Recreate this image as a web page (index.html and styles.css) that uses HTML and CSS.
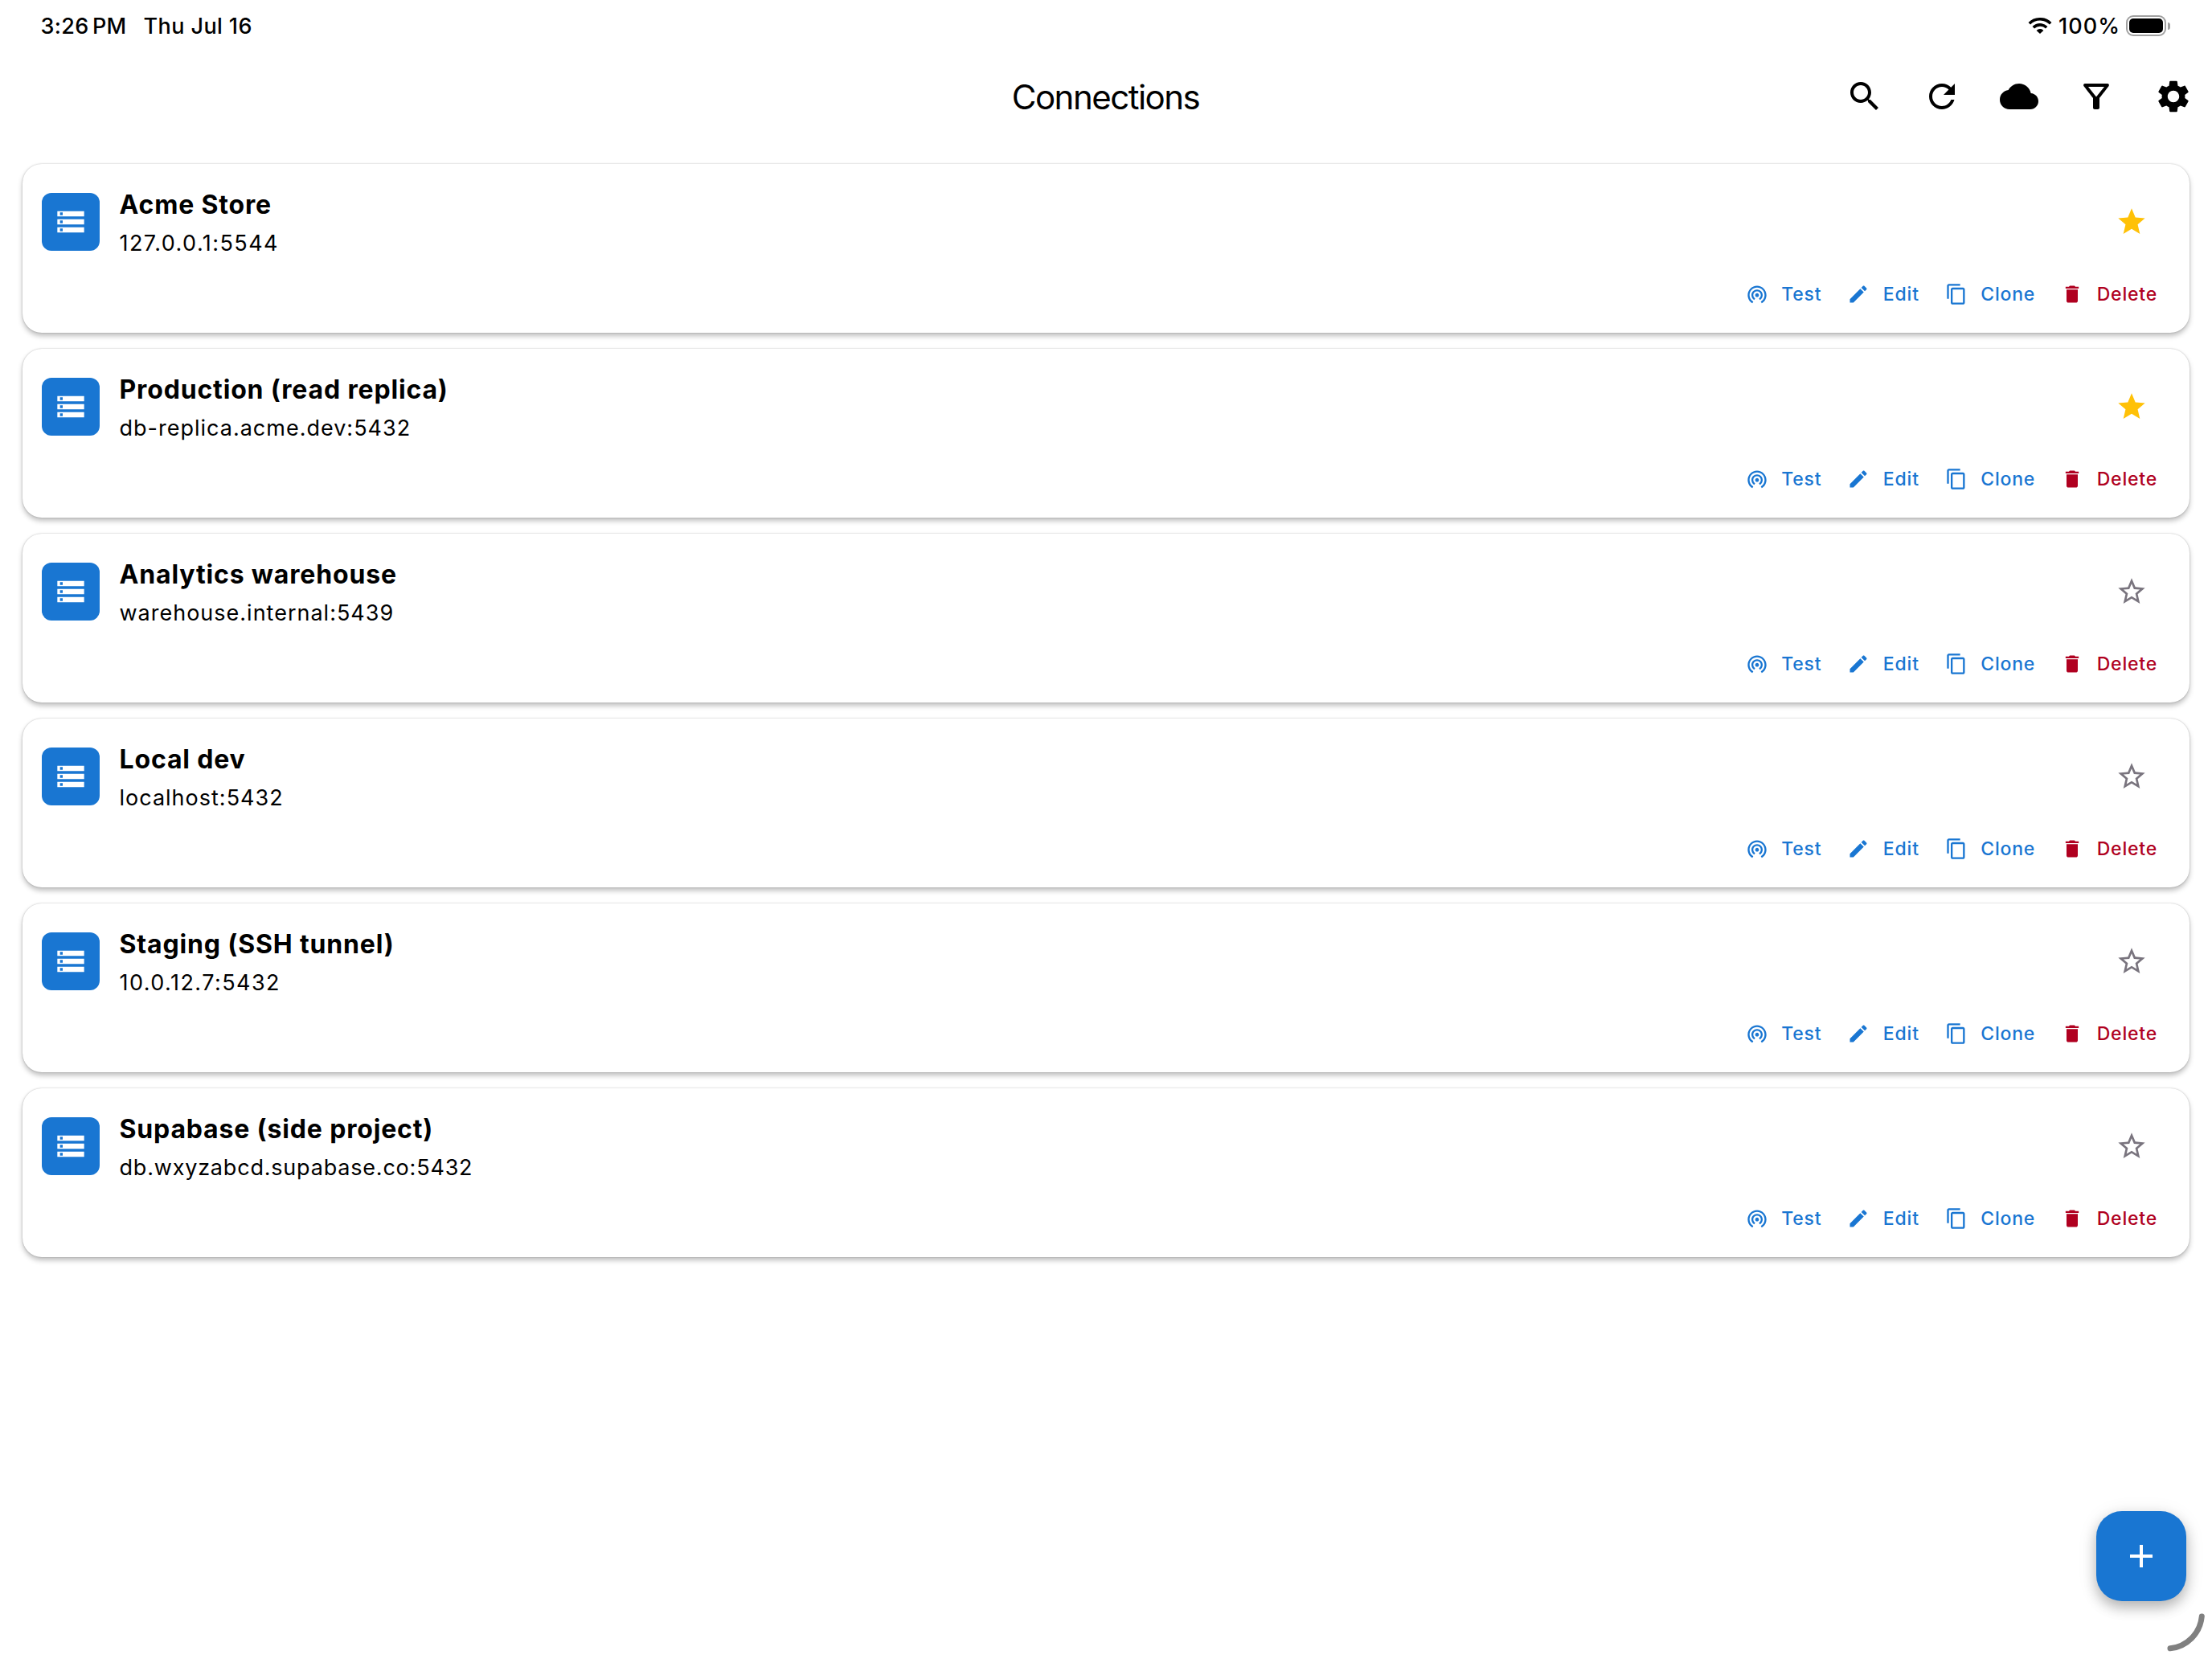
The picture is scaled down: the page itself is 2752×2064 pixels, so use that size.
FILE: index.html
```html
<!DOCTYPE html>
<html lang="en">
<head>
    <meta charset="UTF-8">
    <meta name="viewport" content="width=device-width, initial-scale=1.0">
    <title>Connections</title>
    <link rel="stylesheet" href="styles.css">
</head>
<body>

    <!-- Icon sprite -->
    <svg class="sprite" aria-hidden="true">
        <symbol id="storage" viewBox="0 0 24 24"><path d="M2 20h20v-4H2v4zm2-3h2v2H4v-2zM2 4v4h20V4H2zm4 3H4V5h2v2zm-4 7h20v-4H2v4zm2-3h2v2H4v-2z"/></symbol>
        <symbol id="star" viewBox="0 0 24 24"><path d="M12 17.27L18.18 21l-1.64-7.03L22 9.24l-7.19-.61L12 2 9.19 8.63 2 9.24l5.46 4.73L5.82 21z"/></symbol>
        <symbol id="star-outline" viewBox="0 0 24 24"><path d="M22 9.24l-7.19-.62L12 2 9.19 8.63 2 9.24l5.46 4.73L5.82 21 12 17.27 18.18 21l-1.63-7.03L22 9.24zM12 15.4l-3.76 2.27 1-4.28-3.32-2.88 4.38-.38L12 6.1l1.71 4.04 4.38.38-3.32 2.88 1 4.28L12 15.4z"/></symbol>
        <symbol id="test" viewBox="0 0 24 24"><path d="M12 11c-1.1 0-2 .9-2 2s.9 2 2 2 2-.9 2-2-.9-2-2-2zm6 2c0-3.31-2.69-6-6-6s-6 2.69-6 6c0 2.22 1.21 4.15 3 5.19l1-1.74c-1.19-.7-2-1.97-2-3.45 0-2.21 1.79-4 4-4s4 1.79 4 4c0 1.48-.81 2.75-2 3.45l1 1.74c1.79-1.04 3-2.97 3-5.19zM12 3C6.48 3 2 7.48 2 13c0 3.7 2.01 6.92 4.99 8.65l1-1.73C5.61 18.53 4 15.96 4 13c0-4.42 3.58-8 8-8s8 3.58 8 8c0 2.96-1.61 5.53-4 6.92l1 1.73c2.99-1.73 5-4.95 5-8.65 0-5.52-4.48-10-10-10z"/></symbol>
        <symbol id="edit" viewBox="0 0 24 24"><path d="M3 17.25V21h3.75L17.81 9.94l-3.75-3.75L3 17.25zM20.71 7.04c.39-.39.39-1.02 0-1.41l-2.34-2.34c-.39-.39-1.02-.39-1.41 0l-1.83 1.83 3.75 3.75 1.83-1.83z"/></symbol>
        <symbol id="clone" viewBox="0 0 24 24"><path d="M16 1H4c-1.1 0-2 .9-2 2v14h2V3h12V1zm3 4H8c-1.1 0-2 .9-2 2v14c0 1.1.9 2 2 2h11c1.1 0 2-.9 2-2V7c0-1.1-.9-2-2-2zm0 16H8V7h11v14z"/></symbol>
        <symbol id="delete" viewBox="0 0 24 24"><path d="M6 19c0 1.1.9 2 2 2h8c1.1 0 2-.9 2-2V7H6v12zM19 4h-3.5l-1-1h-5l-1 1H5v2h14V4z"/></symbol>
    </svg>

    <div class="status-bar">
        <div class="status-left">
            <span class="time">3:26</span>
            <span class="meridiem">PM</span>
            <span class="date">Thu Jul 16</span>
        </div>
        <div class="status-right">
            <svg class="wifi" viewBox="0 0 30 20">
                <path d="M1.8 7.2a18.8 18.8 0 0 1 26.4 0" fill="none" stroke="#000" stroke-width="3.6"/>
                <path d="M6.8 12.2a11.7 11.7 0 0 1 16.4 0" fill="none" stroke="#000" stroke-width="3.6"/>
                <path d="M10.6 15.9a6.3 6.3 0 0 1 8.8 0L15 20z"/>
            </svg>
            <span class="percent">100%</span>
            <div class="battery"><div class="battery-level"></div></div>
            <div class="battery-cap"></div>
        </div>
    </div>

    <header class="header">
        <div></div>
        <h1>Connections</h1>
        <div class="header-actions">
            <svg viewBox="0 0 24 24"><path d="M15.5 14h-.79l-.28-.27C15.41 12.59 16 11.11 16 9.5 16 5.91 13.09 3 9.5 3S3 5.91 3 9.5 5.91 16 9.5 16c1.61 0 3.09-.59 4.23-1.57l.27.28v.79l5 4.99L20.49 19l-4.99-5zm-6 0C7.01 14 5 11.99 5 9.5S7.01 5 9.5 5 14 7.01 14 9.5 11.99 14 9.5 14z"/></svg>
            <svg viewBox="0 0 24 24"><path d="M17.65 6.35C16.2 4.9 14.21 4 12 4c-4.42 0-7.99 3.58-7.99 8s3.57 8 7.99 8c3.73 0 6.84-2.55 7.73-6h-2.08c-.82 2.33-3.04 4-5.65 4-3.31 0-6-2.69-6-6s2.69-6 6-6c1.66 0 3.14.69 4.22 1.78L13 11h7V4l-2.35 2.35z"/></svg>
            <svg viewBox="0 0 24 24"><path d="M19.35 10.04C18.67 6.59 15.64 4 12 4 9.11 4 6.6 5.64 5.35 8.04 2.34 8.36 0 10.91 0 14c0 3.31 2.69 6 6 6h13c2.76 0 5-2.24 5-5 0-2.64-2.05-4.78-4.65-4.96z"/></svg>
            <svg viewBox="0 0 24 24"><path d="M7 6h10l-5.01 6.3L7 6zm-2.75-.39C6.27 8.2 10 13 10 13v6c0 .55.45 1 1 1h2c.55 0 1-.45 1-1v-6s3.72-4.8 5.74-7.39A.998.998 0 0 0 18.95 4H5.04c-.83 0-1.3.95-.79 1.61z"/></svg>
            <svg viewBox="0 0 24 24"><path d="M19.14 12.94c.04-.3.06-.61.06-.94 0-.32-.02-.64-.07-.94l2.03-1.58c.18-.14.23-.41.12-.61l-1.92-3.32c-.12-.22-.37-.29-.59-.22l-2.39.96c-.5-.38-1.03-.7-1.62-.94l-.36-2.54c-.04-.24-.24-.41-.48-.41h-3.84c-.24 0-.43.17-.47.41l-.36 2.54c-.59.24-1.13.57-1.62.94l-2.39-.96c-.22-.08-.47 0-.59.22L2.74 8.87c-.12.21-.08.47.12.61l2.03 1.58c-.05.3-.09.63-.09.94s.02.64.07.94l-2.03 1.58c-.18.14-.23.41-.12.61l1.92 3.32c.12.22.37.29.59.22l2.39-.96c.5.38 1.03.7 1.62.94l.36 2.54c.05.24.24.41.48.41h3.84c.24 0 .44-.17.47-.41l.36-2.54c.59-.24 1.13-.56 1.62-.94l2.39.96c.22.08.47 0 .59-.22l1.92-3.32c.12-.22.07-.47-.12-.61l-2.01-1.58zM12 15.6c-1.98 0-3.6-1.62-3.6-3.6s1.62-3.6 3.6-3.6 3.6 1.62 3.6 3.6-1.62 3.6-3.6 3.6z"/></svg>
        </div>
    </header>

    <main class="connection-list">
        <div class="card">
            <div class="card-top">
                <div class="db-icon"><svg><use href="#storage"/></svg></div>
                <div class="card-text">
                    <h2>Acme Store</h2>
                    <p class="ip">127.0.0.1:5544</p>
                </div>
                <svg class="star active"><use href="#star"/></svg>
            </div>
            <div class="card-actions">
                <button><svg><use href="#test"/></svg><span>Test</span></button>
                <button><svg><use href="#edit"/></svg><span>Edit</span></button>
                <button><svg><use href="#clone"/></svg><span>Clone</span></button>
                <button class="danger"><svg><use href="#delete"/></svg><span>Delete</span></button>
            </div>
        </div>

        <div class="card">
            <div class="card-top">
                <div class="db-icon"><svg><use href="#storage"/></svg></div>
                <div class="card-text">
                    <h2>Production (read replica)</h2>
                    <p>db-replica.acme.dev:5432</p>
                </div>
                <svg class="star active"><use href="#star"/></svg>
            </div>
            <div class="card-actions">
                <button><svg><use href="#test"/></svg><span>Test</span></button>
                <button><svg><use href="#edit"/></svg><span>Edit</span></button>
                <button><svg><use href="#clone"/></svg><span>Clone</span></button>
                <button class="danger"><svg><use href="#delete"/></svg><span>Delete</span></button>
            </div>
        </div>

        <div class="card">
            <div class="card-top">
                <div class="db-icon"><svg><use href="#storage"/></svg></div>
                <div class="card-text">
                    <h2>Analytics warehouse</h2>
                    <p>warehouse.internal:5439</p>
                </div>
                <svg class="star"><use href="#star-outline"/></svg>
            </div>
            <div class="card-actions">
                <button><svg><use href="#test"/></svg><span>Test</span></button>
                <button><svg><use href="#edit"/></svg><span>Edit</span></button>
                <button><svg><use href="#clone"/></svg><span>Clone</span></button>
                <button class="danger"><svg><use href="#delete"/></svg><span>Delete</span></button>
            </div>
        </div>

        <div class="card">
            <div class="card-top">
                <div class="db-icon"><svg><use href="#storage"/></svg></div>
                <div class="card-text">
                    <h2>Local dev</h2>
                    <p>localhost:5432</p>
                </div>
                <svg class="star"><use href="#star-outline"/></svg>
            </div>
            <div class="card-actions">
                <button><svg><use href="#test"/></svg><span>Test</span></button>
                <button><svg><use href="#edit"/></svg><span>Edit</span></button>
                <button><svg><use href="#clone"/></svg><span>Clone</span></button>
                <button class="danger"><svg><use href="#delete"/></svg><span>Delete</span></button>
            </div>
        </div>

        <div class="card">
            <div class="card-top">
                <div class="db-icon"><svg><use href="#storage"/></svg></div>
                <div class="card-text">
                    <h2>Staging (SSH tunnel)</h2>
                    <p class="ip">10.0.12.7:5432</p>
                </div>
                <svg class="star"><use href="#star-outline"/></svg>
            </div>
            <div class="card-actions">
                <button><svg><use href="#test"/></svg><span>Test</span></button>
                <button><svg><use href="#edit"/></svg><span>Edit</span></button>
                <button><svg><use href="#clone"/></svg><span>Clone</span></button>
                <button class="danger"><svg><use href="#delete"/></svg><span>Delete</span></button>
            </div>
        </div>

        <div class="card">
            <div class="card-top">
                <div class="db-icon"><svg><use href="#storage"/></svg></div>
                <div class="card-text">
                    <h2>Supabase (side project)</h2>
                    <p class="long">db.wxyzabcd.supabase.co:5432</p>
                </div>
                <svg class="star"><use href="#star-outline"/></svg>
            </div>
            <div class="card-actions">
                <button><svg><use href="#test"/></svg><span>Test</span></button>
                <button><svg><use href="#edit"/></svg><span>Edit</span></button>
                <button><svg><use href="#clone"/></svg><span>Clone</span></button>
                <button class="danger"><svg><use href="#delete"/></svg><span>Delete</span></button>
            </div>
        </div>
    </main>

    <button class="fab" aria-label="Add connection">
        <svg viewBox="0 0 24 24"><path d="M19 13h-6v6h-2v-6H5v-2h6V5h2v6h6v2z"/></svg>
    </button>

    <!-- window resize handle -->
    <svg class="resize-handle" viewBox="0 0 52 52"><path d="M44.3 6A44 44 0 0 1 5 45.8"/></svg>

</body>
</html>
```
FILE: styles.css
```css
* {
    box-sizing: border-box;
}

body {
    font-family: Inter, "Liberation Sans", sans-serif;
    margin: 0;
    min-height: 2064px;
    background-color: #ffffff;
    color: #000;
}

svg {
    display: block;
    flex-shrink: 0;
    fill: currentColor;
}

.sprite {
    display: none;
}

/* Status bar */
.status-bar {
    display: flex;
    justify-content: space-between;
    align-items: center;
    height: 64px;
    padding: 0 52px 0 50.5px;
    font-size: 27px;
    font-weight: 500;
    letter-spacing: 0.3px;
}

.status-left, .status-right {
    display: flex;
    align-items: center;
}

.meridiem {
    margin-left: 4.5px;
}

.date {
    margin-left: 21px;
    letter-spacing: 0.4px;
}

.wifi {
    width: 30px;
    height: 20px;
}

.percent {
    margin-left: 8px;
    letter-spacing: 1px;
}

.battery {
    width: 50px;
    height: 26px;
    margin-left: 7px;
    padding: 2px;
    border: 2px solid #a0a0a0;
    border-radius: 9px;
}

.battery-level {
    height: 18px;
    border-radius: 5px;
    background-color: #000;
}

.battery-cap {
    width: 3px;
    height: 9px;
    margin-left: 2px;
    border-radius: 0 3px 3px 0;
    background-color: #a0a0a0;
}

/* Header */
.header {
    display: grid;
    grid-template-columns: 1fr auto 1fr;
    align-items: center;
    height: 112px;
    padding: 0 24px;
}

h1 {
    margin: 0;
    padding-right: 1px;
    font-size: 42px;
    font-weight: 400;
    letter-spacing: -1.5px;
}

.header-actions {
    display: flex;
    justify-content: flex-end;
    gap: 48px;
}

.header-actions svg {
    width: 48px;
    height: 48px;
}

/* Connection cards */
.connection-list {
    display: flex;
    flex-direction: column;
    gap: 20px;
    padding: 28px 28px 0;
}

.card {
    height: 210px;
    padding: 27px 40px 0 24px;
    border-radius: 24px;
    background-color: #ffffff;
    box-shadow: 0 0 2px rgba(0, 0, 0, 0.25), 0 4px 6px rgba(0, 0, 0, 0.25);
}

.card-top {
    display: flex;
    align-items: flex-start;
    height: 120px;
}

.db-icon {
    width: 72px;
    height: 72px;
    margin-top: 9px;
    padding: 16px;
    border-radius: 12px;
    background-color: #1976d2;
    color: #fff;
}

.db-icon svg {
    width: 40px;
    height: 40px;
}

.card-text {
    flex: 1;
    margin-left: 24.5px;
}

h2 {
    margin: 0;
    font-size: 32px;
    font-weight: 700;
    line-height: 48px;
    letter-spacing: 0.84px;
}

.card-text p {
    margin: 0;
    font-size: 27px;
    font-weight: 400;
    line-height: 47px;
    letter-spacing: 1px;
}

.card-text .ip {
    letter-spacing: 1.45px;
}

.card-text .long {
    letter-spacing: 0.8px;
}

.star {
    width: 40px;
    height: 40px;
    margin: 25px 12px 0 0;
    color: #79747e;
}

.star.active {
    color: #ffc107;
}

.card-actions {
    display: flex;
    justify-content: flex-end;
    gap: 32px;
}

.card-actions button {
    display: flex;
    align-items: center;
    gap: 16.5px;
    padding: 0;
    border: none;
    background: none;
    font-family: inherit;
    font-size: 23px;
    font-weight: 500;
    line-height: 28px;
    letter-spacing: 0.8px;
    color: #1976d2;
    cursor: pointer;
}

.card-actions span {
    padding-top: 1px;
}

.card-actions svg {
    width: 28px;
    height: 28px;
}

.card-actions .danger {
    color: #b00020;
}

/* Floating button */
.fab {
    position: absolute;
    right: 32px;
    top: 1880px;
    display: flex;
    align-items: center;
    justify-content: center;
    width: 112px;
    height: 112px;
    border: none;
    border-radius: 32px;
    background-color: #1976d2;
    color: #fff;
    box-shadow: 0 8px 16px rgba(0, 0, 0, 0.24), 0 4px 24px rgba(0, 0, 0, 0.1);
    cursor: pointer;
}

.fab svg {
    width: 48px;
    height: 48px;
}

.resize-handle {
    position: absolute;
    left: 2695px;
    top: 2005px;
    width: 52px;
    height: 52px;
    fill: none;
    stroke: #808080;
    stroke-width: 7;
    stroke-linecap: round;
}
```
